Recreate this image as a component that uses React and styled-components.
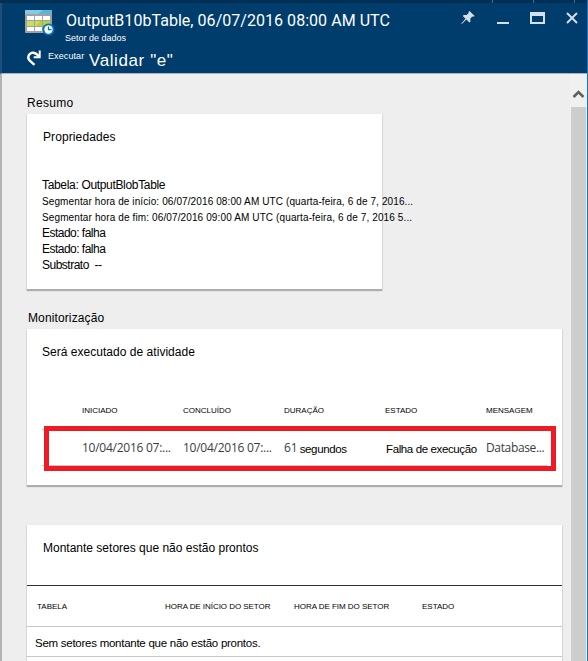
import React from "react";
import styled, { createGlobalStyle } from "styled-components";

const GlobalStyle = createGlobalStyle`
  * { box-sizing: border-box; }
  body { margin: 0; background: #eeeeee; font-family: "Liberation Sans", Arial, sans-serif; }
`;

const Blade = styled.div`
  width: 588px;
  height: 661px;
  display: flex;
  flex-direction: column;
  overflow: hidden;
  background: #eeeeee;
  border-right: 1px solid #1077c9;
`;

const TopStrip = styled.div`
  flex: none;
  height: 3px;
  display: flex;
  padding-left: 492px;
  gap: 40px;
  background: #032f54;
`;

const Tick = styled.span`
  width: 1px;
  height: 3px;
  background: #4b6880;
`;

const Header = styled.header`
  flex: none;
  height: 71px;
  display: flex;
  align-items: flex-start;
  background: #003c6c;
  border-left: 2px solid #1f507b;
  border-bottom: 1px solid #a3b3c2;
  color: #fff;
`;

const Titles = styled.div`
  flex: 1;
  display: grid;
  grid-template-columns: 40px 1fr;
  grid-template-rows: 28px 14px 26px;
  padding-left: 23px;
`;

const IconCell = styled.div`
  grid-row: 1 / 3;
  padding-top: 6px;
  line-height: 0;
`;

const Title = styled.h1`
  margin: 8px 0 0 1px;
  font: 400 16px/20px Roboto, sans-serif;
  letter-spacing: 0.04px;
  white-space: nowrap;
`;

const Subtitle = styled.div`
  font-size: 9px;
  line-height: 14px;
`;

const Commands = styled.div`
  grid-column: 1 / 3;
  display: flex;
  align-items: flex-start;
  white-space: nowrap;
`;

const RedoIcon = styled.svg`
  margin: 4px 6px 0 1px;
`;

const RunLabel = styled.span`
  width: 41px;
  font-size: 9px;
  line-height: 14px;
  margin-top: 4px;
  letter-spacing: 0.1px;
`;

const ValidateLabel = styled.span`
  font-size: 17px;
  line-height: 22px;
  margin-top: 5px;
  letter-spacing: 0.6px;
`;

const WindowButtons = styled.div`
  display: flex;
  height: 30px;
  padding-right: 8px;
`;

const Main = styled.div`
  flex: 1;
  min-height: 0;
  display: flex;
`;

const Content = styled.main`
  flex: 1;
  padding: 21px 0 0 25px;
  border-left: 2px solid #b3b3b3;
  white-space: nowrap;
`;

const Scrollbar = styled.div`
  width: 17px;
  display: flex;
  flex-direction: column;
  align-items: center;
  background: #f0f0f0;
`;

const Arrow = styled.svg`
  flex: none;
  margin: 15px 0 8px;
`;

const Thumb = styled.div`
  flex: 1;
  width: 15px;
  background: #cdcdcd;
`;

const Text = styled.div`
  height: 16px;
  line-height: ${(p) => p.$line || 16}px;
  color: #000;
  font-size: ${(p) => p.$size || 12}px;
  letter-spacing: ${(p) => p.$track || 0}px;
  margin-left: ${(p) => p.$indent || 0}px;
`;

const Card = styled.section`
  position: relative;
  width: ${(p) => p.$width}px;
  height: ${(p) => p.$height}px;
  margin: ${(p) => p.$margin};
  padding: ${(p) => p.$padding};
  background: #fff;
  box-shadow: 0 1px 1px 1px rgba(0, 0, 0, 0.06), 0 2px 1px rgba(0, 0, 0, 0.22);
`;

const Properties = styled.div`
  padding-top: 32px;
`;

const RunGrid = styled.div`
  display: grid;
  grid-template-columns: 101px 101px 101px 101px 1fr;
  padding-left: 40px;
`;

const ColumnHeads = styled(RunGrid)`
  margin-top: 46px;
  height: 23px;
`;

const Head = styled.div`
  font-size: 8px;
  line-height: 10px;
  color: #000;
  letter-spacing: ${(p) => p.$track || 0}px;
`;

const RunRow = styled(RunGrid)`
  margin-right: 15px;
  height: 37px;
  padding-top: 10px;
  border-top: 1px solid #c8c8c8;
  border-bottom: 1px solid #c8c8c8;
`;

const Value = styled.span`
  font: 12px/16px "Open Sans", sans-serif;
  letter-spacing: ${(p) => p.$track || 0}px;
  color: #3b3b44;
`;

const Word = styled.span`
  font-size: 11.5px;
  line-height: 18px;
  letter-spacing: -0.38px;
  margin-left: ${(p) => p.$indent || 0}px;
  color: #000;
`;

const Duration = styled.div`
  display: flex;
  gap: 2px;
`;

const Highlight = styled.div`
  position: absolute;
  left: 17px;
  top: 97px;
  width: 512px;
  height: 45px;
  border: 5px solid #ee1b24;
`;

const SliceHeads = styled.div`
  display: grid;
  grid-template-columns: 128px 129px 128px 1fr;
  height: 42px;
  margin-top: 29px;
  padding: 16px 0 0 10px;
  border-top: 1px solid #333;
  border-bottom: 1px solid #c8c8c8;
`;

const EmptyRow = styled.div`
  height: 30px;
  padding: 8px 0 0 8px;
  border-bottom: 1px solid #c8c8c8;
`;

const TableClock = () => (
  <svg width="30" height="27" viewBox="0 0 30 27">
    <rect x="0" y="1" width="27" height="23" rx="1" fill="#a0a1a2" />
    <path d="M0 5V2a1 1 0 0 1 1-1h25a1 1 0 0 1 1 1v3z" fill="#59b4d9" />
    <path d="M0 5V2a1 1 0 0 1 1-1h17l-5 4z" fill="#86c9e4" />
    <path d="M2 7h7v4H2zM10 7h7v4h-7zM18 7h7v4h-7zM2 18h7v4H2zM10 18h7v4h-7z" fill="#fff" />
    <path d="M2 12h7v5H2zM10 12h7v5h-7zM18 12h7v5h-7z" fill="#b8d432" />
    <path d="M2 12h7v5H2zM10 12h5l-4 5h-1z" fill="#c9de5b" />
    <circle cx="23.5" cy="20.5" r="6" fill="#0072c6" />
    <circle cx="23.5" cy="20.5" r="4.2" fill="#fff" />
    <path d="M23.5 17.5v3.2h3" fill="none" stroke="#0072c6" strokeWidth="1.3" />
  </svg>
);

const runHeads = ["INICIADO", "CONCLUÍDO", "DURAÇÃO", "ESTADO", "MENSAGEM"];

export default function App() {
  return (
    <Blade>
      <GlobalStyle />
      <TopStrip><Tick /><Tick /><Tick /></TopStrip>
      <Header>
        <Titles>
          <IconCell><TableClock /></IconCell>
          <Title>OutputB10bTable, 06/07/2016 08:00 AM UTC</Title>
          <Subtitle>Setor de dados</Subtitle>
          <Commands>
            <RedoIcon width="16" height="18" viewBox="26 49 16 18" fill="none" stroke="#fff">
              <path d="M34.5 64.8 29.8 60.6C27 58 28.4 53.6 32 52.8c2.600-.5 4.600.8 6.800 3.400" strokeWidth="2.400" />
              <path d="M39.700 50.500v6.700h-6" strokeWidth="2" />
            </RedoIcon>
            <RunLabel>Executar</RunLabel>
            <ValidateLabel>Validar "e"</ValidateLabel>
          </Commands>
        </Titles>
        <WindowButtons>
          <svg width="120" height="30" viewBox="460 3 120 30">
            <path d="m470.500 11 5.200 5-1.300.7-1.200-.2-2 2.200.3 2.700-1.100 1-3-2.800-4.600 4.400-.5-.5 4.200-4.800-2.700-2.700 1-1.100 2.800.2 2.100-2-.2-1.200z" fill="#d5dfe8" />
            <path d="M498 22h12v2h-12z" fill="#d5dfe8" />
            <path d="M531 12h15v12h-15zM533 16v6h11v-6z" fillRule="evenodd" fill="#d5dfe8" />
            <path d="m568 13 10 10m0-10-10 10" stroke="#d5dfe8" strokeWidth="1.900" />
          </svg>
        </WindowButtons>
      </Header>
      <Main>
        <Content>
          <Text $track={0.28}>Resumo</Text>
          <Card $width={355} $height={175} $margin="3px 0 21px" $padding="15px 0 0 15px">
            <Text $track={0.1} $indent={1}>Propriedades</Text>
            <Properties>
              <Text $track={-0.33}>Tabela: OutputBlobTable</Text>
              <Text $size={10} $line={18} $track={0.11}>Segmentar hora de início: 06/07/2016 08:00 AM UTC (quarta-feira, 6 de 7, 2016...</Text>
              <Text $size={10} $line={18} $track={0.12}>Segmentar hora de fim: 06/07/2016 09:00 AM UTC (quarta-feira, 6 de 7, 2016 5...</Text>
              <Text $track={-0.52}>Estado: falha</Text>
              <Text $track={-0.52}>Estado: falha</Text>
              <Text $track={-0.5}>Substrato&nbsp; --</Text>
            </Properties>
          </Card>
          <Text $track={0.12} $indent={1}>Monitorização</Text>
          <Card $width={535} $height={156} $margin="3px 0 0" $padding="15px 0 0 15px">
            <Text $track={0.03}>Será executado de atividade</Text>
            <ColumnHeads>
              {runHeads.map((label) => <Head key={label}>{label}</Head>)}
            </ColumnHeads>
            <RunRow>
              <Value $track={-0.26}>10/04/2016 07:...</Value>
              <Value $track={-0.26}>10/04/2016 07:...</Value>
              <Duration><Value>61</Value><Word>segundos</Word></Duration>
              <Word $indent={1}>Falha de execução</Word>
              <Value $track={-0.35}>Database...</Value>
            </RunRow>
            <Highlight />
          </Card>
          <Card $width={535} $height={160} $margin="40px 0 0" $padding="15px 0 0">
            <Text $indent={16}>Montante setores que não estão prontos</Text>
            <SliceHeads>
              <Head>TABELA</Head>
              <Head $track={-0.05}>HORA DE INÍCIO DO SETOR</Head>
              <Head $track={-0.03}>HORA DE FIM DO SETOR</Head>
              <Head>ESTADO</Head>
            </SliceHeads>
            <EmptyRow><Text $size={11.5} $track={-0.26}>Sem setores montante que não estão prontos.</Text></EmptyRow>
          </Card>
        </Content>
        <Scrollbar>
          <Arrow width="13" height="10" viewBox="0 0 13 10"><path d="M1.500 8 6.500 3l5 5" fill="none" stroke="#606060" strokeWidth="2.600" /></Arrow>
          <Thumb />
        </Scrollbar>
      </Main>
    </Blade>
  );
}
